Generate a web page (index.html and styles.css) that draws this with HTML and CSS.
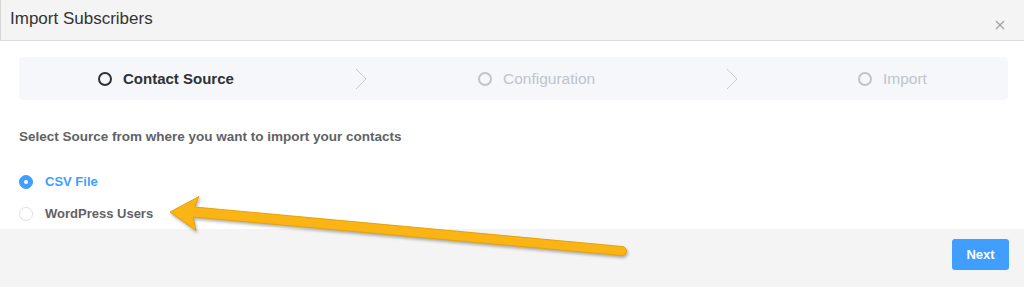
FILE: index.html
```html
<!DOCTYPE html>
<html lang="en">
<head>
  <meta charset="UTF-8">
  <title>Import Subscribers</title>
  <meta name="viewport" content="width=device-width, initial-scale=1.0">
  <link rel="stylesheet" href="styles.css">
</head>
<body>

  <div class="modal">
    <div class="modal-header">
      <span class="modal-title">Import Subscribers</span>
      <svg class="close" width="10" height="10" viewBox="0 0 10 10">
        <path d="M1 1 L9 9 M9 1 L1 9" stroke="#a0a0a0" stroke-width="1.2" fill="none"/>
      </svg>
    </div>

    <div class="modal-body">
      <div class="steps">
        <div class="step active">
          <span class="step-icon"></span>
          <span class="step-title">Contact Source</span>
          <span class="step-arrow">
            <svg width="12" height="22" viewBox="0 0 12 22"><path d="M1 1 L11 11 L1 21" stroke="#c8ccd3" stroke-width="1" fill="none"/></svg>
          </span>
        </div>
        <div class="step">
          <span class="step-icon"></span>
          <span class="step-title">Configuration</span>
          <span class="step-arrow">
            <svg width="12" height="22" viewBox="0 0 12 22"><path d="M1 1 L11 11 L1 21" stroke="#c8ccd3" stroke-width="1" fill="none"/></svg>
          </span>
        </div>
        <div class="step last">
          <span class="step-icon"></span>
          <span class="step-title">Import</span>
        </div>
      </div>

      <p class="label">Select Source from where you want to import your contacts</p>

      <div class="radios">
        <label class="radio checked"><span class="radio-dot"></span>CSV File</label>
        <label class="radio"><span class="radio-dot"></span>WordPress Users</label>
      </div>
    </div>

    <div class="modal-footer">
      <button class="btn-next">Next</button>
    </div>

    <!-- annotation arrow drawn over the dialog -->
    <svg class="annotation" width="1024" height="287" viewBox="0 0 1024 287">
      <path d="M170 212 L199 196.5 L194.5 207 L622 246.5 A4.5 4.5 0 0 1 622 255.5 L193 217 L196 230.5 Z"
            fill="#fab515" stroke="#e6a20a" stroke-width="1" stroke-linejoin="round"/>
    </svg>
  </div>

</body>
</html>
```

FILE: styles.css
```css
body {
  margin: 0;
  font-family: "Liberation Sans", Arial, sans-serif;
  background: #fff;
}
.modal {
  position: relative;
  width: 1024px;
  height: 287px;
  display: flex;
  flex-direction: column;
  overflow: hidden;
}
.modal-header {
  height: 41px;
  background: #f4f4f4;
  border-bottom: 1px solid #dcdcdc;
  border-left: 1px solid #d6d6d6;
  display: flex;
  align-items: center;
  justify-content: space-between;
  padding: 0 19px 0 9px;
  box-sizing: border-box;
}
.modal-title {
  font-size: 17px;
  color: #333;
  margin-top: -2px;
}
.close {
  margin-top: 9px;
}
.modal-body {
  padding: 16px 16px 0 19px;
  flex: 1;
}
.steps {
  display: flex;
  background: #f5f7fa;
  border-radius: 4px;
  height: 43px;
  padding: 0 79px;
  align-items: center;
}
.step {
  flex: 0 0 380px;
  display: flex;
  align-items: center;
  color: #c0c4cc;
}
.step.last {
  flex: 0 0 auto;
}
.step-icon {
  width: 10px;
  height: 10px;
  border: 2px solid #c0c4cc;
  border-radius: 50%;
  margin-right: 11px;
}
.step-title {
  font-size: 15.5px;
}
.step.active {
  color: #303133;
}
.step.active .step-icon {
  border-color: #303133;
}
.step.active .step-title {
  font-weight: bold;
  font-size: 15px;
}
.step-arrow {
  flex: 1;
  display: flex;
  justify-content: center;
  height: 22px;
}
.step-arrow svg {
  margin-left: 10px;
}
.label {
  margin: 29px 0 0;
  font-size: 13.5px;
  font-weight: bold;
  color: #606266;
}
.radios {
  margin-top: 30px;
  display: flex;
  flex-direction: column;
  gap: 17px;
}
.radio {
  display: flex;
  align-items: center;
  font-size: 13px;
  font-weight: bold;
  color: #606266;
  height: 15px;
}
.radio-dot {
  width: 12px;
  height: 12px;
  border: 1px solid #dcdfe6;
  border-radius: 50%;
  background: #fff;
  margin-right: 12px;
  box-sizing: content-box;
  position: relative;
}
.radio.checked {
  color: #409eff;
}
.radio.checked .radio-dot {
  background: #409eff;
  border-color: #409eff;
}
.radio.checked .radio-dot::after {
  content: "";
  position: absolute;
  left: 4px;
  top: 4px;
  width: 4px;
  height: 4px;
  border-radius: 50%;
  background: #fff;
}
.modal-footer {
  height: 58px;
  background: #f4f4f4;
  display: flex;
  justify-content: flex-end;
  align-items: flex-start;
  padding: 10px 15px 0 0;
  box-sizing: border-box;
}
.btn-next {
  width: 57px;
  height: 31px;
  background: #409eff;
  color: #fff;
  border: none;
  border-radius: 3px;
  font-family: inherit;
  font-size: 13px;
  font-weight: bold;
}
.annotation {
  position: absolute;
  left: 0;
  top: 0;
  pointer-events: none;
  filter: drop-shadow(1px 2px 1.5px rgba(0, 0, 0, 0.3));
}
```
